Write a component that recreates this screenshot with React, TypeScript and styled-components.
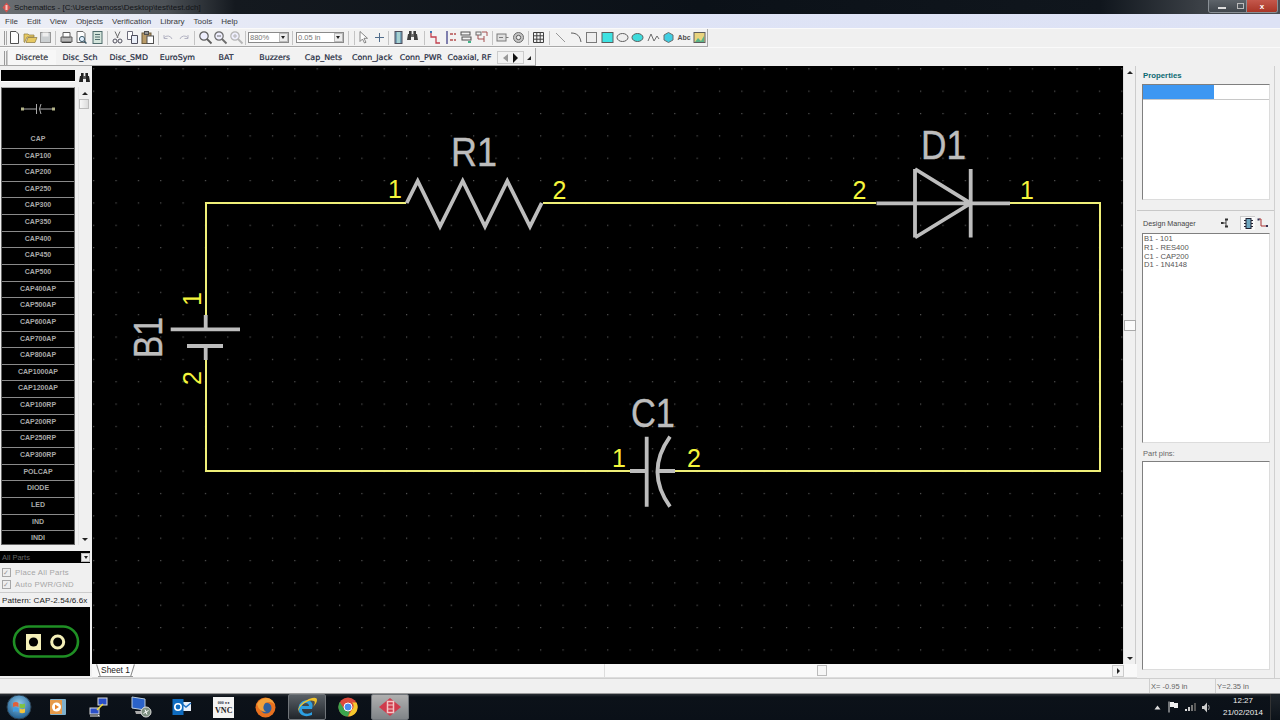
import React from "react";
import styled, { createGlobalStyle } from "styled-components";

const Global = createGlobalStyle`
  html, body { margin: 0; padding: 0; background: #f0f0f0; }
  * { box-sizing: border-box; }
`;

const UI = `"Liberation Sans", Arial, sans-serif`;
const TAB = `"DejaVu Sans", Verdana, sans-serif`;

const Page = styled.div`
  width: 1280px; height: 720px; overflow: hidden; display: flex; flex-direction: column;
  background: #f0f0f0; font-family: ${UI}; color: #333; position: relative;
`;

/* Title bar */
const TitleBar = styled.div`
  height: 14px; flex: none; display: flex; align-items: center; padding-left: 2px;
  background: linear-gradient(90deg, #6a6e72 0, #4c5156 165px, #14191f 235px, #0b1118 700px, #10161d 1100px, #3b4046 1200px, #4a4f55 1280px);
`;
const TitleText = styled.span`
  font-size: 8px; margin-left: 3px; color: #121417; white-space: nowrap;
`;
const WinButtons = styled.div`
  margin-left: auto; margin-right: 2px; display: flex; height: 13px; align-self: flex-start;
  border: 1px solid #8a9096; border-top: 0; border-radius: 0 0 3px 3px; overflow: hidden;
`;
const WinBtn = styled.div<{ $w: number; $close?: boolean }>`
  width: ${p => p.$w}px; display: flex; align-items: center; justify-content: center;
  color: #fff; font-size: 8px; font-weight: 700;
  background: ${p => p.$close ? "linear-gradient(#c4584c,#a93526)" : "linear-gradient(#5e646a,#40464c)"};
  border-left: ${p => p.$close ? "1px solid #8a9096" : "0"};
`;
const MinGlyph = styled.div`width: 8px; height: 2px; background: #ddd; margin-top: 3px;`;
const MaxGlyph = styled.div`width: 7px; height: 6px; border: 1px solid #bbb;`;

/* Menu */
const MenuBar = styled.div`
  height: 14px; flex: none; display: flex; align-items: center; gap: 9px; padding-left: 5px;
  background: linear-gradient(90deg, #eceef6, #dfe4f6 40%, #dde2f5);
  font-size: 8px; color: #3a3a40;
`;

/* Toolbars */
const ToolRow = styled.div<{ $h: number }>`
  height: ${p => p.$h}px; flex: none; display: flex; align-items: stretch;
  background: #f0f0f0; border-top: 1px solid #fafafa;
`;
const ToolBand = styled.div<{ $w: number; $low?: boolean }>`
  width: ${p => p.$w}px; display: flex; align-items: center; padding-left: 4px;
  ${p => p.$low ? "padding-top: 2px;" : ""}
  border-bottom: 1px solid #a8a8a8; border-right: 1px solid #a8a8a8; background: #f2f2f2;
`;
const Grip = styled.div`
  width: 3px; height: 14px; flex: none; border-left: 1px solid #999; border-right: 1px solid #aaa;
`;
const Tool = styled.div`
  width: 15.4px; height: 15px; flex: none; display: flex; align-items: center; justify-content: center; opacity: 0.85;
`;
const TextTool = styled(Tool)`font-size: 7px; font-weight: 700; color: #333;`;
const Sep = styled.div<{ $w: number }>`
  width: ${p => p.$w}px; height: 14px; flex: none; display: flex; justify-content: center;
  &::after { content: ""; width: 1px; background: #c4c4c4; }
`;
const Combo = styled.div<{ $w: number }>`
  width: ${p => p.$w}px; height: 11px; flex: none; display: flex; align-items: center;
  border: 1px solid #8a8a8a; background: #fff; font-size: 7.5px; color: #777; padding-left: 1px; position: relative;
`;
const ComboBtn = styled.div`
  margin-left: auto; width: 9px; height: 9px; background: #ececec; border: 1px solid #bbb;
  display: flex; align-items: center; justify-content: center;
  &::after { content: ""; border: 2.5px solid transparent; border-top: 3px solid #222; border-bottom: 0; }
`;
const TabItem = styled.div<{ $active?: boolean }>`
  width: 48.7px; flex: none; height: 100%; display: flex; align-items: center; justify-content: center;
  font-family: ${TAB}; font-size: 7.9px; color: #1e2a40;
  white-space: nowrap; -webkit-text-stroke: 0.2px #1e2a40;
  ${p => p.$active ? "background:#f7f7f7; border-left:1px solid #ccc; color:#333;" : ""}
`;
const TabNav = styled.div`
  width: 27px; height: 13px; margin-left: 3px; flex: none; border: 1px solid #ccc; display: flex;
  align-items: center; justify-content: space-around; padding: 0 3px;
`;
const TriL = styled.div`border: 4px solid transparent; border-right: 5px solid #999; border-left: 0;`;
const TriR = styled.div`border: 5px solid transparent; border-left: 5px solid #111; border-right: 0;`;
const TriUp = styled.div`
  width: 0; height: 0; margin-left: 3px; border-left: 4px solid transparent; border-bottom: 4px solid #222;
`;

/* Main */
const Main = styled.div`flex: 1; min-height: 0; display: flex;`;
const Left = styled.div`
  width: 92px; flex: none; display: flex; flex-direction: column; padding-top: 3px; background: #f0f0f0;
`;
const SearchRow = styled.div`display: flex; align-items: center; height: 13px; flex: none;`;
const Search = styled.div`width: 74px; height: 12px; margin-left: 1px; background: #000; border-bottom: 1px solid #fff;`;
const Glass = styled.div`margin-left: 3px; width: 12px; height: 12px;`;
const ListWrap = styled.div`display: flex; margin-top: 5px; height: 458px; flex: none; gap: 3px; padding-left: 1px;`;
const List = styled.div`
  width: 74px; background: #000; border-left: 1px solid #666; border-right: 1px solid #666; border-top: 1px solid #aaa;
  border-bottom: 1px solid #666; display: flex; flex-direction: column; overflow: hidden;
`;
const Preview = styled.div`
  height: 59.5px; flex: none; display: flex; flex-direction: column; align-items: center; padding-top: 15px;
`;
const PartName = styled.div`
  color: #a9a9a9; font-size: 7px; font-weight: 700; text-align: center;
`;
const PreviewName = styled(PartName)`margin-top: 20px; line-height: 8px;`;
const PartRow = styled(PartName)`
  height: 16.65px; flex: none; line-height: 14.5px; border-top: 1px solid #8a8a8a;
`;
const VScroll = styled.div`
  width: 12px; flex: none; background: #f0f0f0; display: flex; flex-direction: column;
  position: relative; border-left: 1px solid #e4e4e4;
`;
const SArrow = styled.div<{ $down?: boolean }>`
  height: 12px; flex: none; display: flex; align-items: center; justify-content: center;
  ${p => p.$down ? "margin-top:auto;" : ""}
  &::after {
    content: ""; border: 2.5px solid transparent; border-left-width: 3px; border-right-width: 3px;
    ${p => p.$down ? "border-top: 3px solid #222; border-bottom: 0;" : "border-bottom: 3px solid #222; border-top: 0;"}
  }
`;
const SThumb = styled.div`
  width: 10px; height: 10px; background: linear-gradient(90deg,#f8f8f8,#dcdcdc); border: 1px solid #bbb;
`;
const Select = styled.div`
  margin-top: 6px; height: 12px; width: 90px; flex: none; display: flex; background: #000; align-items: center;
  font-size: 7.5px; color: #666; padding-left: 2px;
`;
const Check = styled.div`
  height: 12px; flex: none; display: flex; align-items: center; gap: 4px; padding-left: 2px;
  font-size: 7.8px; color: #a6a6a6; letter-spacing: 0.25px; white-space: nowrap;
`;
const CheckBox = styled.div`
  width: 9px; height: 9px; border: 1px solid #a6a6a6; background: #eee; display: flex; align-items: center; justify-content: center;
  color: #999; font-size: 7px; line-height: 1;
`;
const Checks = styled.div`margin-top: 3px; display: flex; flex-direction: column;`;
const PatternLabel = styled.div`
  margin-top: 2px; height: 15px; flex: none; border-top: 1px solid #ccc; font-size: 8.1px; color: #222; padding: 3px 0 0 2px;
  white-space: nowrap; overflow: hidden; width: 92px; letter-spacing: 0.1px;
`;
const PatternBox = styled.div`width: 90px; flex: 1; background: #000; display: flex; align-items: center; justify-content: center; margin-bottom: 2px;`;

const Center = styled.div`width: 1045px; flex: none; display: flex; flex-direction: column;`;
const CanvasRow = styled.div`flex: 1; min-height: 0; display: flex;`;
const Canvas = styled.svg`width: 1031px; height: 598px; flex: none; display: block; background: #000;`;
const RightScroll = styled(VScroll)`
  width: 13px; border-left: 1px solid #e0e0e0; border-right: 1px solid #ccc;
`;
const Splitter = styled.div`
  position: absolute; left: 0; top: 254px; width: 12px; height: 11px; background: #fbfbfb; border: 1px solid #aaa;
`;
const TabStrip = styled.div`
  height: 14px; flex: none; display: flex; align-items: flex-start; background: #f9f9f9; border-bottom: 1px solid #ddd; padding-left: 6px;
`;
const SheetTab = styled.div`
  width: 35px; height: 13px; font-size: 8.4px; color: #222; text-align: center; line-height: 12px; background: #fff;
  border-bottom: 1px solid #999; position: relative;
  &::before, &::after { content: ""; position: absolute; top: 0; width: 1px; height: 13px; background: #888; }
  &::before { left: 0; transform: rotate(-17deg); }
  &::after { right: 0; transform: rotate(17deg); }
`;
const HScroll = styled.div`
  margin-left: auto; margin-right: 13px; width: 520px; height: 13px; display: flex; align-items: center; position: relative;
  border-left: 1px solid #ddd;
`;
const HThumb = styled.div`position: absolute; left: 212px; width: 10px; height: 11px; background: #f6f6f6; border: 1px solid #bbb;`;
const HArrow = styled.div`
  margin-left: auto; width: 12px; height: 12px; background: #f4f4f4; border: 1px solid #ccc; display: flex; align-items: center; justify-content: center;
  &::after { content: ""; border: 3px solid transparent; border-left: 3px solid #222; border-right: 0; }
`;

const Right = styled.div`
  width: 143px; flex: none; display: flex; padding-right: 5px; padding-left: 5px;
`;
const RightInner = styled.div`
  flex: 1; display: flex; flex-direction: column; padding-top: 3px; border-right: 1px solid #d0d0d0;
`;
const PropTitle = styled.div`height: 15px; padding: 2px 0 0 1px; color: #0c6a72; font-size: 7.8px; font-weight: 700; flex: none;`;
const Inset = styled.div<{ $h: number }>`
  height: ${p => p.$h}px; flex: none; width: 128px; background: #fff; display: flex; flex-direction: column;
  border: 1px solid #dcdcdc; border-top-color: #7f7f7f; border-left-color: #7f7f7f;
`;
const PropRow = styled.div`height: 15px; flex: none; display: flex; border-bottom: 1px solid #c8c8c8;`;
const PropKey = styled.div`width: 71px; background: #3d97f2;`;
const Divider = styled.div`height: 1px; flex: none; margin: 10px 0 0 -5px; background: #c8c8c8;`;
const DMHead = styled.div`
  height: 22px; flex: none; display: flex; align-items: center; font-size: 7.2px; color: #444; padding: 2px 0 0 1px; width: 128px;
`;
const DMIcons = styled.div`margin-left: auto; display: flex; align-items: center;`;
const DMIcon = styled.div<{ $on?: boolean; $gap?: number }>`
  width: 15px; height: 14px; display: flex; align-items: center; justify-content: center;
  margin-right: ${p => p.$gap ?? 0}px;
  ${p => p.$on ? "background:#fafafa; border-left:1px solid #ccc; border-top:1px solid #ccc;" : ""}
`;
const DMLine = styled.div`font-size: 7.6px; line-height: 8.75px; color: #555; padding-left: 1px; white-space: nowrap;`;
const DMList = styled.div`padding-top: 1px;`;
const PinsLabel = styled.div`height: 18px; flex: none; padding: 6px 0 0 1px; font-size: 7.5px; color: #666;`;

const Status = styled.div`
  height: 15px; flex: none; display: flex; justify-content: flex-end; background: #f0f0f0; border-top: 1px solid #cfcfcf;
`;
const StatusCell = styled.div<{ $w: number }>`
  width: ${p => p.$w}px; border-left: 1px solid #cfcfcf; font-size: 7.5px; color: #666; padding: 3px 0 0 1px;
`;

/* Task bar */
const Taskbar = styled.div`
  height: 27px; flex: none; display: flex; align-items: center;
  background: linear-gradient(#2a2f35 0, #0c1219 3px, #0a1018 100%); border-top: 1px solid #9a9a9a;
`;
const StartSlot = styled.div`width: 37px; flex: none; display: flex; justify-content: center;`;
const TaskItem = styled.div<{ $active?: boolean; $bg?: string }>`
  width: 41.5px; height: 26px; flex: none; display: flex; align-items: center; justify-content: center; padding: 0 1.5px;
  & > div { width: 100%; height: 100%; display: flex; align-items: center; justify-content: center; border-radius: 2px;
    ${p => p.$active ? `border: 1px solid #70757a; background: ${p.$bg};` : ""}
  }
`;
const Tray = styled.div`margin-left: auto; display: flex; align-items: center; height: 100%;`;
const TrayIcon = styled.div<{ $w: number }>`width: ${p => p.$w}px; display: flex; justify-content: center; flex: none;`;
const Clock = styled.div`
  width: 50px; text-align: center; color: #eee; font-size: 8px; line-height: 12px; margin-left: 5px; white-space: nowrap;
`;
const ShowDesktop = styled.div`width: 10px; flex: none; height: 100%; margin-left: 2px; border-left: 1px solid #333; background: linear-gradient(#20262c,#0c1219);`;

const VncBox = styled.div`
  width: 21px; height: 21px; background: #f4f4f4; display: flex; flex-direction: column; align-items: center; justify-content: center;
  color: #222; font-family: "Liberation Serif", serif; font-weight: 700; font-size: 8px; line-height: 9px;
`;
const VncTop = styled.div`font-size: 4px; line-height: 6px; color: #334;`;

const T = (p: { children: React.ReactNode }) => (
  <Tool><svg width="15" height="15" viewBox="0 0 15 15" fill="none">{p.children}</svg></Tool>
);

const Mag = ({ c = "#444", sign = "" }: { c?: string; sign?: string }) => (
  <>
    <circle cx="6" cy="6" r="4.2" stroke={c} strokeWidth="1.2" fill="#eef" />
    <path d="M9 9l4.5 4.5" stroke={c} strokeWidth="1.8" />
    {sign !== "" && <path d={sign} stroke={c} />}
  </>
);

const Binoculars = () => (
  <svg width="13" height="12" viewBox="0 0 13 12">
    <path d="M1 10l1-6h3v6zM8 10V4h3l1 6z" fill="#222" />
    <rect x="3" y="1" width="2.6" height="3" fill="#222" />
    <rect x="7.4" y="1" width="2.6" height="3" fill="#222" />
    <rect x="5" y="4" width="3" height="3" fill="#555" />
  </svg>
);

const parts = ["CAP100","CAP200","CAP250","CAP300","CAP350","CAP400","CAP450","CAP500","CAP400AP","CAP500AP","CAP600AP","CAP700AP","CAP800AP","CAP1000AP","CAP1200AP","CAP100RP","CAP200RP","CAP250RP","CAP300RP","POLCAP","DIODE","LED","IND","INDI"];
const tabs = ["Discrete","Disc_Sch","Disc_SMD","EuroSym","BAT","Buzzers","Cap_Nets","Conn_Jack","Conn_PWR","Coaxial, RF"];
const menus = ["File","Edit","View","Objects","Verification","Library","Tools","Help"];

const WIRE = "#efef78";
const GREY = "#bdbdbd";
const PIN = "#f5f53c";
const dfont = `"Liberation Sans", Arial, sans-serif`;

const Schematic = () => (
  <Canvas viewBox="92 66 1031 598">
    <defs>
      <pattern id="grid" x="3.7" y="1.2" width="22.35" height="22.35" patternUnits="userSpaceOnUse">
        <rect x="0" y="0" width="1.2" height="1.2" fill="#565656" />
      </pattern>
    </defs>
    <rect x="92" y="66" width="1031" height="598" fill="url(#grid)" />
    <g stroke={WIRE} strokeWidth="2" fill="none">
      <path d="M406 203H206V316M206 358V471H630M675 471H1100V203H1010M876 203H543" />
    </g>
    <g stroke={GREY} strokeWidth="3.8" fill="none" strokeLinejoin="miter">
      <path d="M406.7 203L417.7 181L440 226.500L462.700 181L485 226.500L507.300 181L530 226.500L541.700 203" />
      <path d="M876.500 203.300H1010M915 169V237.500M970.700 169V237.500M915 169L970.700 203.300L915 237.500" />
      <path d="M630 471H646.700M658 471H675M646.700 436.700V506.700M670 436.700Q645 471.700 670 506.700" />
      <path d="M170.700 329.300H240M187 346H223M205.700 315V329.300M205.700 346V360" />
    </g>
    <g fontFamily={dfont} fill="#bdbdbd" fontSize="40" stroke="#bdbdbd" strokeWidth="0.4">
      <text x="451" y="166" textLength="46" lengthAdjust="spacingAndGlyphs">R1</text>
      <text x="921" y="159" textLength="45" lengthAdjust="spacingAndGlyphs">D1</text>
      <text x="631" y="427" textLength="44" lengthAdjust="spacingAndGlyphs">C1</text>
      <text transform="translate(162 358) rotate(-90)" textLength="41" lengthAdjust="spacingAndGlyphs" fontSize="40">B1</text>
    </g>
    <g fontFamily={dfont} fill={PIN} fontSize="25">
      <text x="388" y="198">1</text>
      <text x="552.500" y="198.500">2</text>
      <text x="852.500" y="198.500">2</text>
      <text x="1020" y="198.500">1</text>
      <text x="612" y="467">1</text>
      <text x="687" y="467">2</text>
      <text transform="translate(201 306) rotate(-90)">1</text>
      <text transform="translate(201 385) rotate(-90)">2</text>
    </g>
  </Canvas>
);

function VncIcon() {
  return <VncBox><VncTop>000 ●●</VncTop>VNC</VncBox>;
}

export default function App() {
  return (
    <Page>
      <Global />
      <TitleBar>
        <svg width="9" height="11" viewBox="0 0 9 11"><path d="M4.500 0.500L8.500 5.500L4.500 10.500L0.500 5.500z" fill="#d8534f" /><rect x="3.500" y="3" width="2" height="5" fill="#f3c6c0" /></svg>
        <TitleText>Schematics - [C:\Users\amoss\Desktop\test\test.dch]</TitleText>
        <WinButtons>
          <WinBtn $w={26}><MinGlyph /></WinBtn>
          <WinBtn $w={11}><MaxGlyph /></WinBtn>
          <WinBtn $w={31} $close>x</WinBtn>
        </WinButtons>
      </TitleBar>
      <MenuBar>{menus.map(m => <span key={m}>{m}</span>)}</MenuBar>

      <ToolRow $h={19}>
        <ToolBand $w={708}>
          <Grip />
          <T><path d="M3.500 1.500h5.500l2.500 2.500v9.500h-8z" fill="#fff" stroke="#333" /></T>
          <T><path d="M1 12V4h4l1 1h5v2H4l-2.500 5.500zM3 12.500L5 7.500h9L12 12.500z" fill="#e6c24a" stroke="#7a6420" strokeWidth=".7" /></T>
          <T><rect x="2.500" y="2.500" width="10" height="10" fill="#c5c9cc" stroke="#888" /><rect x="4.500" y="2.500" width="6" height="4" fill="#eee" /></T>
          <Sep $w={5.5} />
          <T><path d="M2 7h11v5H2z" fill="#aaa" stroke="#444" /><path d="M4 2.500h7V7H4z" fill="#fff" stroke="#444" /><path d="M3 12.500h9" stroke="#222" /></T>
          <T><path d="M3 1.500h6l2 2v9H3z" fill="#fff" stroke="#555" /><circle cx="8" cy="9" r="2.600" stroke="#245" fill="#dfefff" /><path d="M10 11l2.500 2.500" stroke="#245" strokeWidth="1.500" /></T>
          <T><rect x="3" y="1.500" width="9" height="12" fill="#cfe3d8" stroke="#355" /><path d="M5 4.500h5M5 7h5M5 9.500h5" stroke="#355" /></T>
          <Sep $w={4.5} />
          <T><path d="M5 1.500L8 8M10 1.500L7 8" stroke="#555" /><circle cx="5" cy="11" r="2" stroke="#334" /><circle cx="10" cy="11" r="2" stroke="#334" /></T>
          <T><path d="M2.500 1.500h5v8h-5z" fill="#fff" stroke="#556" /><path d="M6.500 5.500h6v8h-6z" fill="#e8eef8" stroke="#334" /></T>
          <T><rect x="2" y="3" width="9" height="10.500" fill="#b08c50" stroke="#54401c" /><rect x="4.500" y="1.500" width="4" height="3" fill="#888" stroke="#333" /><rect x="7" y="6" width="6.500" height="7.500" fill="#fff" stroke="#333" /></T>
          <Sep $w={5} />
          <T><path d="M3 8a4.500 4.500 0 0 1 8 1M3 5v3.500h3.500" stroke="#aab" /></T>
          <T><path d="M12 8a4.500 4.500 0 0 0-8 1M12 5v3.500H8.500" stroke="#aab" /></T>
          <Sep $w={6.5} />
          <T><Mag /></T>
          <T><Mag c="#555" sign="M4 6h4" /></T>
          <T><Mag c="#aaa" sign="M4 6h4M6 4v4" /></T>
          <Sep $w={4} />
          <Combo $w={41}>880%<ComboBtn /></Combo>
          <Sep $w={7} />
          <Combo $w={48}>0.05 in<ComboBtn /></Combo>
          <Sep $w={9} />
          <Sep $w={3} />
          <T><path d="M4 1.500v10l2.500-2.500 2 4 1.500-.7-2-4h3.500z" fill="#fff" stroke="#555" strokeWidth=".8" /></T>
          <T><path d="M7.500 3v9M3 7.500h9" stroke="#33557a" /></T>
          <Sep $w={4} />
          <T><rect x="4" y="1.500" width="7" height="12" fill="#5d93ad" stroke="#334" /><rect x="6" y="2" width="3" height="11" fill="#9cc" /></T>
          <T><Binoculars /></T>
          <Sep $w={6.5} />
          <T><path d="M3 2v5h5v6h4" stroke="#b23" strokeWidth="1.300" /><rect x="2" y="1" width="2" height="2" fill="#26a" /></T>
          <T><path d="M3 1v13" stroke="#227" strokeWidth="1.300" /><path d="M6 4h3M6 10h3M10 4h2M10 10h2" stroke="#a33" strokeWidth="1.300" /></T>
          <T><rect x="2" y="2" width="9" height="3" stroke="#333" /><rect x="3" y="7" width="9" height="3" stroke="#333" /><rect x="9" y="11" width="3" height="2" fill="#2a7" /></T>
          <T><rect x="2" y="2" width="5" height="3" stroke="#555" /><path d="M8 2h5v4M10 6v6M4 5v4h6" stroke="#933" /></T>
          <Sep $w={5.5} />
          <T><rect x="2" y="4" width="9" height="7" fill="#ddd" stroke="#666" /><path d="M11 7.500h2.500M4 7.500h4" stroke="#666" /></T>
          <T><circle cx="7.500" cy="7.500" r="5" fill="#bbb" stroke="#555" /><circle cx="7.500" cy="7.500" r="2.200" fill="#eee" stroke="#444" /></T>
          <Sep $w={5} />
          <T><path d="M2.500 2.500h10v10h-10zM2.500 5.800h10M2.500 9.200h10M5.800 2.500v10M9.200 2.500v10" stroke="#222" /></T>
          <Sep $w={7} />
          <T><path d="M3 3l9 9" stroke="#888" /></T>
          <T><path d="M2 3c6 0 9 3 10 9" stroke="#444" /></T>
          <T><rect x="2.500" y="2.500" width="10" height="10" fill="#eee" stroke="#666" /></T>
          <T><rect x="2" y="2.500" width="11" height="10" fill="#1fe0e0" stroke="#444" /></T>
          <T><ellipse cx="7.500" cy="7.500" rx="5.500" ry="4" fill="#eee" stroke="#444" /></T>
          <T><ellipse cx="7.500" cy="7.500" rx="5.500" ry="4" fill="#1fd8d8" stroke="#444" /></T>
          <T><path d="M2 11L5 4l3 7 3-5 2 3" stroke="#555" /></T>
          <T><path d="M7.500 2.500L12 5v5l-4.500 2.500L3 10V5z" fill="#22c8e0" stroke="#555" /></T>
          <TextTool>Abc</TextTool>
          <T><rect x="2" y="2.500" width="11" height="10" fill="#e8cf6a" stroke="#444" /><path d="M3 12l3-4 3 3 3-5v6z" fill="#4a7" /></T>
        </ToolBand>
      </ToolRow>

      <ToolRow $h={19}>
        <ToolBand $w={536} $low>
          <Grip />
          {tabs.map((t, i) => <TabItem key={t} $active={i === 0}>{t}</TabItem>)}
          <TabNav><TriL /><TriR /></TabNav>
          <TriUp />
        </ToolBand>
      </ToolRow>

      <Main>
        <Left>
          <SearchRow><Search /><Glass><Binoculars /></Glass></SearchRow>
          <ListWrap>
            <List>
              <Preview>
                <svg width="36" height="12" viewBox="0 0 36 12">
                  <path d="M3 6h13M20 6h13M16.500 1v10" stroke="#aaa" />
                  <path d="M21 1q-3 5 0 10" stroke="#aaa" fill="none" />
                  <rect x="1" y="4.500" width="3" height="3" fill="#b5b58a" /><rect x="32" y="4.500" width="3" height="3" fill="#b5b58a" />
                </svg>
                <PreviewName>CAP</PreviewName>
              </Preview>
              {parts.map(p => <PartRow key={p}>{p}</PartRow>)}
            </List>
            <VScroll>
              <SArrow />
              <SThumb />
              <SArrow $down />
            </VScroll>
          </ListWrap>
          <Select>All Parts<ComboBtn /></Select>
          <Checks>
            <Check><CheckBox>✓</CheckBox>Place All Parts</Check>
            <Check><CheckBox>✓</CheckBox>Auto PWR/GND</Check>
          </Checks>
          <PatternLabel>Pattern: CAP-2.54/6.6x</PatternLabel>
          <PatternBox>
            <svg width="90" height="40" viewBox="0 0 90 40">
              <rect x="14" y="4.500" width="64" height="30" rx="15" fill="none" stroke="#1f8f24" strokeWidth="2.600" />
              <rect x="26" y="12" width="15" height="16" fill="#f4efb8" />
              <circle cx="33.500" cy="20" r="4.600" fill="#000" />
              <circle cx="57.700" cy="20" r="6" fill="#000" stroke="#f4efb8" strokeWidth="3" />
            </svg>
          </PatternBox>
        </Left>

        <Center>
          <CanvasRow>
            <Schematic />
            <RightScroll>
              <SArrow />
              <Splitter />
              <SArrow $down />
            </RightScroll>
          </CanvasRow>
          <TabStrip>
            <SheetTab>Sheet 1</SheetTab>
            <HScroll><HThumb /><HArrow /></HScroll>
          </TabStrip>
        </Center>

        <Right>
          <RightInner>
            <PropTitle>Properties</PropTitle>
            <Inset $h={116}><PropRow><PropKey /></PropRow></Inset>
            <Divider />
            <DMHead>
              Design Manager
              <DMIcons>
                <DMIcon $gap={8}><svg width="9" height="10" viewBox="0 0 9 10"><path d="M6 1v8M3 5h3" stroke="#444" /><rect x="5" y="0.500" width="3" height="2" fill="#333" /><rect x="5" y="7.500" width="3" height="2" fill="#333" /><rect x="1" y="4" width="2.500" height="2" fill="#333" /></svg></DMIcon>
                <DMIcon $on><svg width="9" height="11" viewBox="0 0 9 11"><rect x="2" y="0.500" width="5" height="10" fill="#6fa8c0" stroke="#223" /><path d="M0 2.500h2M0 5.500h2M0 8.500h2M7 2.500h2M7 5.500h2M7 8.500h2" stroke="#223" /></svg></DMIcon>
                <DMIcon><svg width="11" height="10" viewBox="0 0 11 10"><path d="M2 1h2v7h5" stroke="#a33" fill="none" /><rect x="0.500" y="0.500" width="2" height="2" fill="#335" /><rect x="9" y="7" width="2" height="2" fill="#335" /></svg></DMIcon>
              </DMIcons>
            </DMHead>
            <Inset $h={210}>
              <DMList>
                <DMLine>B1 - 101</DMLine>
                <DMLine>R1 - RES400</DMLine>
                <DMLine>C1 - CAP200</DMLine>
                <DMLine>D1 - 1N4148</DMLine>
              </DMList>
            </Inset>
            <PinsLabel>Part pins:</PinsLabel>
            <Inset $h={209} />
          </RightInner>
        </Right>
      </Main>

      <Status>
        <StatusCell $w={66}>X= -0.95 in</StatusCell>
        <StatusCell $w={65}>Y=2.35 in</StatusCell>
      </Status>

      <Taskbar>
        <StartSlot>
          <svg width="26" height="26" viewBox="0 0 26 26">
            <defs><radialGradient id="orb" cx="50%" cy="35%" r="65%"><stop offset="0" stopColor="#8ec6e8" /><stop offset="1" stopColor="#1f5f92" /></radialGradient></defs>
            <circle cx="13" cy="13" r="12" fill="url(#orb)" stroke="#2b3f50" />
            <path d="M7 9q3-2 5.500 0v4q-3-1.500-5.500 0z" fill="#e2603a" />
            <path d="M13.500 9.500q3 1.500 5.500 0v4q-3 1.500-5.500 0z" fill="#7fc241" />
            <path d="M7 14q3-1.500 5.500 0v4q-3-1.500-5.500 0z" fill="#3f9be0" />
            <path d="M13.500 14.500q3 1.500 5.500 0v4q-3 1.500-5.500 0z" fill="#f4c33a" />
          </svg>
        </StartSlot>
        <TaskItem><div><svg width="18" height="18" viewBox="0 0 18 18"><rect x="1" y="1" width="16" height="16" rx="1" fill="#7fb0cc" /><rect x="1" y="2" width="12" height="14" fill="#e69a4a" /><circle cx="7.500" cy="9" r="4.500" fill="#fff" /><path d="M6 6.500L10 9l-4 2.500z" fill="#e8832a" /></svg></div></TaskItem>
        <TaskItem><div><svg width="22" height="22" viewBox="0 0 22 22"><rect x="10" y="2" width="9" height="7" fill="#2a4fc8" stroke="#ddd" /><rect x="2" y="12" width="9" height="6" fill="#2a4fc8" stroke="#ddd" /><path d="M2 20h10M11 19l-1 1M14 9l-3 3" stroke="#eee" /><path d="M15 8l-6 6" stroke="#f2dc3a" strokeWidth="1.500" /></svg></div></TaskItem>
        <TaskItem><div><svg width="22" height="22" viewBox="0 0 22 22"><path d="M2 1l13 2v11L2 12z" fill="#2a62c8" stroke="#bcd" /><path d="M5 15h10l2 3H6z" fill="#aaa" /><circle cx="16" cy="16" r="5" fill="#7d8f80" stroke="#ddd" /><path d="M13.500 17.500l5-3M15 13.500l2 5" stroke="#fff" /></svg></div></TaskItem>
        <TaskItem><div><svg width="20" height="18" viewBox="0 0 20 18"><rect x="9" y="4" width="10" height="9" fill="#e8f0fa" /><path d="M9 5l5 4 5-4" stroke="#1f72c4" fill="none" strokeWidth="1.500" /><rect x="0.500" y="1" width="11" height="16" fill="#0f6cc0" /><circle cx="6" cy="9" r="3.200" fill="none" stroke="#fff" strokeWidth="1.600" /></svg></div></TaskItem>
        <TaskItem><div><VncIcon /></div></TaskItem>
        <TaskItem><div><svg width="21" height="21" viewBox="0 0 21 21"><circle cx="10.500" cy="10.500" r="10" fill="#e8711f" /><circle cx="11" cy="11" r="5.500" fill="#2f5f9c" /><path d="M2 7q3-6 10-6 6 1 8 7-2-3-6-3-4 0-5 3-2 4 2 7-7 0-9-8z" fill="#f2a13a" /></svg></div></TaskItem>
        <TaskItem $active $bg="linear-gradient(#5a6066,#20252b)"><div><svg width="24" height="22" viewBox="0 0 24 22"><path d="M17 13H7c0 5 6 6 10 3v3c-7 3-14 0-13.500-7C4 5 11 3 15 5c3 2 3 5 2 8zM7 10h7c0-4-6-4-7 0z" fill="#2c9fe2" /><path d="M3 17Q2 8 14 3q8-3 8 1 0 3-4 7 3-5 1-6Q14 3 7 9q-4 4-4 8z" fill="#f0c22c" /></svg></div></TaskItem>
        <TaskItem><div><svg width="20" height="20" viewBox="0 0 20 20"><circle cx="10" cy="10" r="9.500" fill="#dd4b3e" /><path d="M18.500 5.500A9.500 9.500 0 0 1 10 19.500l4-7a4.500 4.500 0 0 0 0-7z" fill="#f6c82d" /><path d="M10 19.500A9.500 9.500 0 0 1 1.800 5l4 6.800a4.500 4.500 0 0 0 6 2z" fill="#3ba54d" /><circle cx="10" cy="10" r="4" fill="#4a8cf0" stroke="#fff" /></svg></div></TaskItem>
        <TaskItem $active $bg="linear-gradient(#b0b0b0,#808488)"><div><svg width="24" height="22" viewBox="0 0 24 22"><path d="M12 2L23 11L12 20L1 11z" fill="#cf3b4c" /><rect x="9.500" y="5.500" width="6" height="11" fill="none" stroke="#f4c6c6" strokeWidth="1.500" /><path d="M9 9h7M9 13h7" stroke="#f4c6c6" /></svg></div></TaskItem>
        <Tray>
          <TrayIcon $w={15}><svg width="7" height="5" viewBox="0 0 7 5"><path d="M3.500 0.500L6.500 4.500H0.500z" fill="#ddd" /></svg></TrayIcon>
          <TrayIcon $w={17}><svg width="11" height="12" viewBox="0 0 11 12"><path d="M1 0.500V11.500" stroke="#ddd" /><path d="M2 1h4v1h4v5H6V6H2z" fill="#eee" /></svg></TrayIcon>
          <TrayIcon $w={17}><svg width="11" height="8" viewBox="0 0 11 8"><rect x="0" y="6" width="2" height="2" fill="#ddd" /><rect x="3" y="4" width="2" height="4" fill="#ccc" /><rect x="6" y="2" width="2" height="6" fill="#777" /><rect x="9" y="0" width="2" height="8" fill="#555" /></svg></TrayIcon>
          <TrayIcon $w={14}><svg width="9" height="11" viewBox="0 0 9 11"><path d="M0 4h2l3-3.500v10L2 7H0z" fill="#ccc" /><path d="M6.500 3q1.500 2.500 0 5" stroke="#999" fill="none" /></svg></TrayIcon>
          <Clock>12:27<br />21/02/2014</Clock>
          <ShowDesktop />
        </Tray>
      </Taskbar>
    </Page>
  );
}
